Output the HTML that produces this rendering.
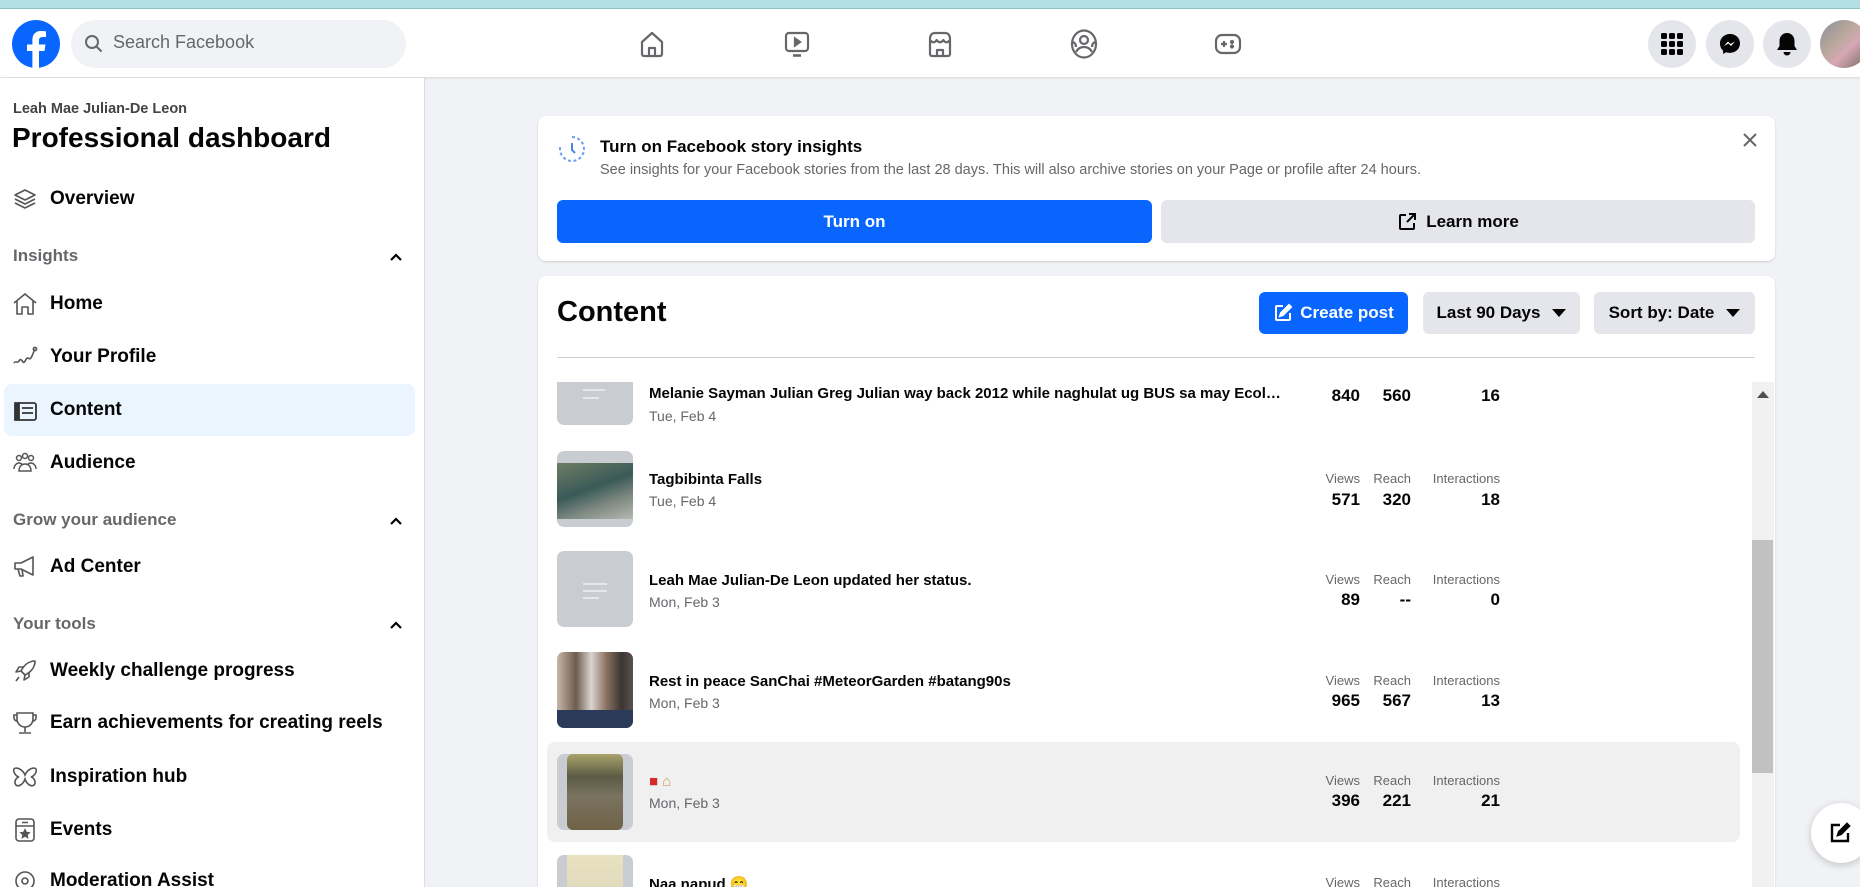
<!DOCTYPE html>
<html><head><meta charset="utf-8">
<style>
*{box-sizing:border-box;margin:0;padding:0}
html,body{width:1860px;height:887px;overflow:hidden}
body{background:#f0f2f5;font-family:"Liberation Sans","Noto Sans CJK SC",sans-serif;color:#050505;position:relative}
.a{position:absolute}
.top{left:0;top:0;width:1860px;height:9px;background:#b3dfe3;border-bottom:1px solid #8fc4c9}
.hdr{left:0;top:9px;width:1860px;height:68px;background:#fff;box-shadow:0 1px 2px rgba(0,0,0,.12)}
.side{left:0;top:78px;width:425px;height:809px;background:#fff;border-right:1px solid #dadde1}
.mi{position:absolute;left:12px;font-size:19px;font-weight:600;color:#050505;display:flex;align-items:center;height:30px;white-space:nowrap}
.mi svg{width:26px;height:26px;margin-right:12px}
.sh{position:absolute;left:13px;font-size:17px;color:#65676b;font-weight:600}
.car{position:absolute;left:389px;width:14px;height:14px}
.card{background:#fff;border-radius:8px;box-shadow:0 1px 2px rgba(0,0,0,.15)}
.btn{border-radius:6px;display:flex;align-items:center;justify-content:center;font-weight:700;font-size:17px}
.row{position:absolute;left:547px;width:1193px;height:100px}
.th{position:absolute;left:10px;width:76px;height:76px;border-radius:7px;background:#c9ccd1;overflow:hidden}
.tt{position:absolute;left:102px;font-size:15px;font-weight:600;white-space:nowrap}
.dt{position:absolute;left:102px;font-size:14px;color:#65676b}
.lb{position:absolute;font-size:13px;color:#65676b;text-align:right}
.nm{position:absolute;font-size:17px;font-weight:600;text-align:right}
.rc{position:absolute;top:11px;width:48px;height:48px;border-radius:50%;background:#e4e6eb;display:flex;align-items:center;justify-content:center}
</style></head><body>
<div class="a top"></div>
<div class="a hdr">
 <svg class="a" style="left:12px;top:11px" width="48" height="48" viewBox="0 0 48 48"><circle cx="24" cy="24" r="24" fill="#0866ff"/><path d="M27 48V31h5.5l1-6.5H27v-4c0-2 .8-3.5 3.8-3.5H34v-5.6c-1-.2-3-.4-5-.4-5 0-8.6 3-8.6 8.6v4.9H15V31h5.4v17z" fill="#fff"/></svg>
 <div class="a" style="left:71px;top:11px;width:335px;height:48px;border-radius:24px;background:#f0f2f5"></div>
 <svg class="a" style="left:84px;top:25px" width="20" height="20" viewBox="0 0 20 20"><circle cx="8" cy="8" r="6" fill="none" stroke="#65676b" stroke-width="2"/><path d="M12.5 12.5l5 5" stroke="#65676b" stroke-width="2"/></svg>
 <div class="a" style="left:113px;top:23px;font-size:18px;color:#65676b">Search Facebook</div>
 <svg class="a" style="left:638px;top:21px" width="28" height="28" viewBox="0 0 28 28" fill="none" stroke="#65676b" stroke-width="2.2" stroke-linejoin="round"><path d="M4 12L14 3l10 9v12a2 2 0 0 1-2 2H6a2 2 0 0 1-2-2z"/><path d="M11 26v-8h6v8"/></svg>
 <svg class="a" style="left:783px;top:21px" width="28" height="28" viewBox="0 0 28 28" fill="none" stroke="#65676b" stroke-width="2.2"><rect x="3" y="3" width="22" height="18" rx="3"/><path d="M12 8.5v7l5-3.5z" fill="#65676b"/><path d="M10 25.5h8" stroke-width="2.6"/></svg>
 <svg class="a" style="left:926px;top:21px" width="28" height="28" viewBox="0 0 28 28" fill="none" stroke="#65676b" stroke-width="2.2" stroke-linejoin="round"><path d="M4 9c0-4 2-6 5-6h10c3 0 5 2 5 6v15a2 2 0 0 1-2 2H6a2 2 0 0 1-2-2z"/><path d="M4 10c2 3 5 3 6.6 0 2 3 4.8 3 6.8 0 1.6 3 4.6 3 6.6 0"/><path d="M11 26v-6h6v6"/></svg>
 <svg class="a" style="left:1070px;top:20px" width="28" height="30" viewBox="0 0 28 30" fill="none" stroke="#65676b" stroke-width="2.2"><ellipse cx="14" cy="15" rx="12" ry="13.5"/><circle cx="14" cy="11" r="4"/><path d="M6 23c2-4 5-5 8-5s6 1 8 5"/><path d="M3 13c2 1 3 3 3 5M25 13c-2 1-3 3-3 5"/></svg>
 <svg class="a" style="left:1214px;top:22px" width="28" height="26" viewBox="0 0 28 26" fill="none" stroke="#65676b" stroke-width="2.2"><rect x="2" y="4" width="24" height="18" rx="6"/><path d="M7 13h6M10 10v6" /><circle cx="18" cy="11" r="1" fill="#65676b"/><circle cx="18" cy="15.5" r="1" fill="#65676b"/></svg>
 <div class="rc" style="left:1648px"><svg width="22" height="22" viewBox="0 0 22 22" fill="#050505"><rect x="0" y="0" width="6" height="6" rx="1.5"/><rect x="8" y="0" width="6" height="6" rx="1.5"/><rect x="16" y="0" width="6" height="6" rx="1.5"/><rect x="0" y="8" width="6" height="6" rx="1.5"/><rect x="8" y="8" width="6" height="6" rx="1.5"/><rect x="16" y="8" width="6" height="6" rx="1.5"/><rect x="0" y="16" width="6" height="6" rx="1.5"/><rect x="8" y="16" width="6" height="6" rx="1.5"/><rect x="16" y="16" width="6" height="6" rx="1.5"/></svg></div>
 <div class="rc" style="left:1706px"><svg width="24" height="24" viewBox="0 0 24 24"><path d="M12 2C6.4 2 2 6.1 2 11.6c0 2.9 1.2 5.4 3.1 7.1V22l3-1.7c1.2.4 2.5.6 3.9.6 5.6 0 10-4.1 10-9.6S17.6 2 12 2z" fill="#050505"/><path d="M6 14l4-4.5 2.5 2.5 4.5-2.5-4 4.5-2.5-2.5z" fill="#fff"/></svg></div>
 <div class="rc" style="left:1763px"><svg width="22" height="24" viewBox="0 0 22 24" fill="#050505"><path d="M11 1c-4.5 0-7.5 3.5-7.5 8v5L1 18h20l-2.5-4V9c0-4.5-3-8-7.5-8z"/><path d="M7.5 20a3.5 3.5 0 0 0 7 0z"/></svg></div>
 <div class="a" style="left:1820px;top:11px;width:48px;height:48px;border-radius:50%;background:linear-gradient(135deg,#8a8f9c,#b9a89a 40%,#d7a7b5 60%,#6f6a5f)"></div>
</div>

<div class="a side">
 <div class="a" style="left:13px;top:23px;font-size:14.5px;font-weight:600;color:#444">Leah Mae Julian-De Leon</div>
 <div class="a" style="left:12px;top:44px;font-size:28px;font-weight:700">Professional dashboard</div>
 <div class="mi" style="top:106px"><svg viewBox="0 0 26 26" fill="none" stroke="#555" stroke-width="1.6" stroke-linejoin="round"><path d="M13 4l10 5-10 5-10-5z"/><path d="M3 13l10 5 10-5M3 17l10 5 10-5"/></svg>Overview</div>
 <div class="sh" style="top:168px">Insights</div>
 <svg class="car" style="top:172px" viewBox="0 0 14 14"><path d="M2 10l5-5 5 5" fill="none" stroke="#050505" stroke-width="2.2"/></svg>
 <div class="mi" style="top:211px"><svg viewBox="0 0 26 26" fill="none" stroke="#555" stroke-width="1.6" stroke-linejoin="round"><path d="M2 12L13 3l11 9M5 10v13h5v-7h6v7h5V10"/></svg>Home</div>
 <div class="mi" style="top:264px"><svg viewBox="0 0 26 26" fill="none" stroke="#555" stroke-width="1.6"><path d="M2 19c2-3 3 1 5-2s2-1 4 1 3-5 5-4 2 2 4-2 2-6 3-6"/><circle cx="23" cy="5" r="1.6"/></svg>Your Profile</div>
 <div class="a" style="left:4px;top:306px;width:411px;height:52px;border-radius:8px;background:#ebf5ff"></div>
 <div class="mi" style="top:317px"><svg viewBox="0 0 26 26" fill="none" stroke="#333" stroke-width="1.8"><path d="M3 6h4v17H3z" fill="#333"/><rect x="6" y="6" width="18" height="17" rx="2"/><path d="M10 11h11M10 16h11"/></svg>Content</div>
 <div class="mi" style="top:370px"><svg viewBox="0 0 26 26" fill="none" stroke="#555" stroke-width="1.5"><circle cx="7" cy="8" r="2.5"/><circle cx="13" cy="6" r="2.5"/><circle cx="19" cy="8" r="2.5"/><path d="M2 19c0-4 3-6 5-6s4 2 4 2M24 19c0-4-3-6-5-6s-4 2-4 2M7 21c0-5 3-7 6-7s6 2 6 7z"/></svg>Audience</div>
 <div class="sh" style="top:432px">Grow your audience</div>
 <svg class="car" style="top:436px" viewBox="0 0 14 14"><path d="M2 10l5-5 5 5" fill="none" stroke="#050505" stroke-width="2.2"/></svg>
 <div class="mi" style="top:474px"><svg viewBox="0 0 26 26" fill="none" stroke="#555" stroke-width="1.6" stroke-linejoin="round"><path d="M3 9h6l12-6v18L9 15H3z"/><path d="M6 15l2 7h3l-1-7"/></svg>Ad Center</div>
 <div class="sh" style="top:536px">Your tools</div>
 <svg class="car" style="top:540px" viewBox="0 0 14 14"><path d="M2 10l5-5 5 5" fill="none" stroke="#050505" stroke-width="2.2"/></svg>
 <div class="mi" style="top:578px"><svg viewBox="0 0 26 26" fill="none" stroke="#555" stroke-width="1.6" stroke-linejoin="round"><path d="M23 3c-6 0-11 4-14 10l4 4c6-3 10-8 10-14z"/><path d="M9 13l-5 1 3-5h5M13 17l-1 5 5-3v-5M7 19l-3 4"/></svg>Weekly challenge progress</div>
 <div class="mi" style="top:630px"><svg viewBox="0 0 26 26" fill="none" stroke="#555" stroke-width="1.6"><path d="M5 3h16v6a8 8 0 0 1-16 0z"/><path d="M13 17v5M7 23h12"/><path d="M5 5H2v3c0 2 2 3 3 3M21 5h3v3c0 2-2 3-3 3"/></svg>Earn achievements for creating reels</div>
 <div class="mi" style="top:684px"><svg viewBox="0 0 26 26" fill="none" stroke="#555" stroke-width="1.6"><path d="M13 11C10 4 3 3 2 5s1 7 5 8c-4 1-5 6-3 8s7 0 9-6c2 6 7 8 9 6s1-7-3-8c4-1 6-6 5-8s-8-1-11 6z"/></svg>Inspiration hub</div>
 <div class="mi" style="top:737px"><svg viewBox="0 0 26 26" fill="none" stroke="#555" stroke-width="1.6"><rect x="4" y="2" width="18" height="22" rx="3"/><path d="M4 9h18M10 5.5h6"/><path d="M13 13l1.2 2.5 2.6.3-2 1.8.6 2.6-2.4-1.4-2.4 1.4.6-2.6-2-1.8 2.6-.3z" fill="#555"/></svg>Events</div>
 <div class="mi" style="top:788px"><svg viewBox="0 0 26 26" fill="none" stroke="#555" stroke-width="1.6"><circle cx="13" cy="13" r="9"/><circle cx="13" cy="13" r="3"/></svg>Moderation Assist</div>
</div>

<!-- Card 1 -->
<div class="a card" style="left:538px;top:116px;width:1237px;height:145px"></div>
<svg class="a" style="left:557px;top:134px" width="30" height="30" viewBox="0 0 30 30" fill="none" stroke="#6c9ef0" stroke-width="2"><path d="M15 3a12 12 0 1 1-11.5 8.5" stroke-dasharray="3 2.5" /><path d="M15 9v7l3 3" stroke="#4a86e8"/></svg>
<div class="a" style="left:600px;top:137px;font-size:17px;font-weight:600">Turn on Facebook story insights</div>
<div class="a" style="left:600px;top:162px;font-size:14.5px;color:#65676b">See insights for your Facebook stories from the last 28 days. This will also archive stories on your Page or profile after 24 hours.</div>
<svg class="a" style="left:1742px;top:132px" width="16" height="16" viewBox="0 0 16 16"><path d="M2 2l12 12M14 2L2 14" stroke="#65676b" stroke-width="2"/></svg>
<div class="a btn" style="left:557px;top:200px;width:595px;height:43px;background:#0866ff;color:#fff">Turn on</div>
<div class="a btn" style="left:1161px;top:200px;width:594px;height:43px;background:#e4e6eb;color:#050505"><svg width="20" height="20" viewBox="0 0 20 20" fill="none" stroke="#050505" stroke-width="2" style="margin-right:9px"><path d="M9 3H4a1 1 0 0 0-1 1v12a1 1 0 0 0 1 1h12a1 1 0 0 0 1-1v-5"/><path d="M12 2h6v6M18 2l-8 8"/></svg>Learn more</div>

<!-- Card 2 -->
<div class="a card" style="left:538px;top:276px;width:1237px;height:611px;border-radius:8px 8px 0 0"></div>

<div class="row" style="top:349px">
 <div class="th" style="top:0"><div style="position:absolute;left:26px;top:40px;width:22px;height:2px;background:#e6e7ea"></div><div style="position:absolute;left:26px;top:48px;width:16px;height:2px;background:#e6e7ea"></div></div>
 <div class="tt" style="top:36px;width:640px;overflow:hidden;text-overflow:ellipsis">Melanie Sayman Julian Greg Julian way back 2012 while naghulat ug BUS sa may Ecoland terminal kay</div>
 <div class="dt" style="top:59px">Tue, Feb 4</div>
 <div class="nm" style="top:37px;right:380px">840</div><div class="nm" style="top:37px;right:329px">560</div><div class="nm" style="top:37px;right:240px">16</div>
</div>
<div class="row" style="top:441px">
 <div class="th" style="top:10px;background:#c9ccd1"><div style="position:absolute;left:0;top:12px;width:76px;height:56px;background:linear-gradient(160deg,#6f7d63,#3a5a58 45%,#7c8880 70%,#b7b9b3)"></div></div>
 <div class="tt" style="top:30px">Tagbibinta Falls</div>
 <div class="dt" style="top:52px">Tue, Feb 4</div>
 <div class="lb" style="top:30px;right:380px">Views</div><div class="lb" style="top:30px;right:329px">Reach</div><div class="lb" style="top:30px;right:240px">Interactions</div>
 <div class="nm" style="top:49px;right:380px">571</div><div class="nm" style="top:49px;right:329px">320</div><div class="nm" style="top:49px;right:240px">18</div>
</div>
<div class="row" style="top:541px">
 <div class="th" style="top:10px"><div style="position:absolute;left:26px;top:32px;width:24px;height:2px;background:#e6e7ea"></div><div style="position:absolute;left:26px;top:39px;width:24px;height:2px;background:#e6e7ea"></div><div style="position:absolute;left:26px;top:46px;width:16px;height:2px;background:#e6e7ea"></div></div>
 <div class="tt" style="top:31px">Leah Mae Julian-De Leon updated her status.</div>
 <div class="dt" style="top:53px">Mon, Feb 3</div>
 <div class="lb" style="top:31px;right:380px">Views</div><div class="lb" style="top:31px;right:329px">Reach</div><div class="lb" style="top:31px;right:240px">Interactions</div>
 <div class="nm" style="top:49px;right:380px">89</div><div class="nm" style="top:49px;right:329px">--</div><div class="nm" style="top:49px;right:240px">0</div>
</div>
<div class="row" style="top:642px">
 <div class="th" style="top:10px;background:linear-gradient(90deg,#c6b8a8,#6e5b4f 25%,#d9d4cf 45%,#8a7160 65%,#3b3533 85%,#5a524c)"><div style="position:absolute;left:0;bottom:0;width:76px;height:18px;background:#2c3a5a"></div></div>
 <div class="tt" style="top:31px">Rest in peace SanChai #MeteorGarden #batang90s</div>
 <div class="dt" style="top:53px">Mon, Feb 3</div>
 <div class="lb" style="top:31px;right:380px">Views</div><div class="lb" style="top:31px;right:329px">Reach</div><div class="lb" style="top:31px;right:240px">Interactions</div>
 <div class="nm" style="top:49px;right:380px">965</div><div class="nm" style="top:49px;right:329px">567</div><div class="nm" style="top:49px;right:240px">13</div>
</div>
<div class="a" style="left:547px;top:742px;width:1193px;height:100px;border-radius:8px;background:#f0f0f0"></div>
<div class="row" style="top:742px">
 <div class="th" style="top:12px"><div style="position:absolute;left:10px;top:0;width:56px;height:76px;border-radius:6px;background:linear-gradient(180deg,#a9a36a 0%,#5b5a44 30%,#7a7361 55%,#6f6246 100%)"></div></div>
 <div class="tt" style="top:31px"><span style="color:#d42a2a">&#9632;</span> <span style="color:#c99a55">&#8962;</span></div>
 <div class="dt" style="top:53px">Mon, Feb 3</div>
 <div class="lb" style="top:31px;right:380px">Views</div><div class="lb" style="top:31px;right:329px">Reach</div><div class="lb" style="top:31px;right:240px">Interactions</div>
 <div class="nm" style="top:49px;right:380px">396</div><div class="nm" style="top:49px;right:329px">221</div><div class="nm" style="top:49px;right:240px">21</div>
</div>
<div class="row" style="top:845px;height:42px;overflow:hidden">
 <div class="th" style="top:10px"><div style="position:absolute;left:10px;top:0;width:56px;height:76px;background:linear-gradient(180deg,#e8e2c0,#d8cfb8)"></div></div>
 <div class="tt" style="top:30px">Naa napud &#128513;</div>
 <div class="lb" style="top:30px;right:380px">Views</div><div class="lb" style="top:30px;right:329px">Reach</div><div class="lb" style="top:30px;right:240px">Interactions</div>
</div>
<!-- cover top of list -->
<div class="a" style="left:540px;top:340px;width:1235px;height:42px;background:#fff"></div>
<div class="a" style="left:557px;top:357px;width:1198px;height:1px;background:#ced0d4"></div>
<div class="a" style="left:557px;top:296px;font-size:29px;font-weight:700">Content</div>
<div class="a btn" style="left:1259px;top:292px;width:149px;height:42px;background:#0866ff;color:#fff"><svg width="20" height="20" viewBox="0 0 20 20" fill="none" stroke="#fff" stroke-width="2" style="margin-right:7px"><path d="M10 3H4a1 1 0 0 0-1 1v12a1 1 0 0 0 1 1h12a1 1 0 0 0 1-1v-6"/><path d="M16 2l2 2-8 8-3 1 1-3z" fill="#fff"/></svg>Create post</div>
<div class="a btn" style="left:1423px;top:292px;width:157px;height:42px;background:#e4e6eb;font-weight:600">Last 90 Days<span style="display:inline-block;margin-left:12px;border-left:7px solid transparent;border-right:7px solid transparent;border-top:8px solid #050505"></span></div>
<div class="a btn" style="left:1594px;top:292px;width:161px;height:42px;background:#e4e6eb;font-weight:600">Sort by: Date<span style="display:inline-block;margin-left:12px;border-left:7px solid transparent;border-right:7px solid transparent;border-top:8px solid #050505"></span></div>
<!-- scrollbar -->
<div class="a" style="left:1752px;top:382px;width:22px;height:505px;background:#f1f1f1"></div>
<div class="a" style="left:1757px;top:391px;border-left:6px solid transparent;border-right:6px solid transparent;border-bottom:7px solid #505050"></div>
<div class="a" style="left:1752px;top:540px;width:21px;height:233px;background:#c1c1c1"></div>
<!-- floating -->
<div class="a" style="left:1811px;top:803px;width:60px;height:60px;border-radius:50%;background:#fff;box-shadow:0 2px 8px rgba(0,0,0,.2)"></div>
<svg class="a" style="left:1829px;top:822px" width="22" height="22" viewBox="0 0 22 22" fill="none" stroke="#050505" stroke-width="2.4"><path d="M11 3H3v16h16v-8"/><path d="M18 2l2 2-8 8-3 1 1-3z" fill="#050505"/></svg>
</body></html>
